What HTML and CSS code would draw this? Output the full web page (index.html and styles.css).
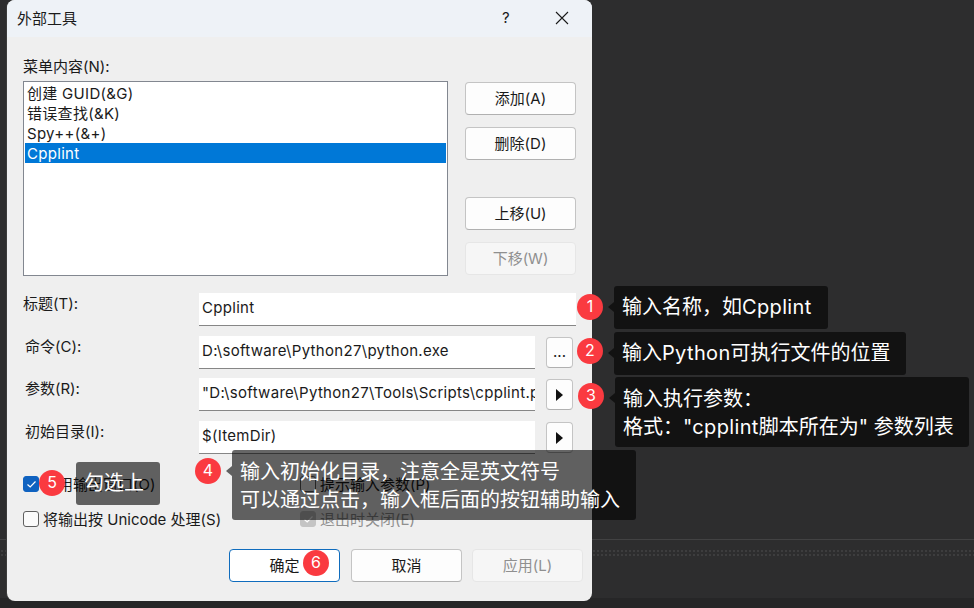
FILE: index.html
```html
<!DOCTYPE html>
<html lang="zh-CN">
<head>
    <meta charset="utf-8" />
    <title>外部工具</title>
    <link rel="stylesheet" href="styles.css">
</head>
<body>
    <div class="desktop">
        <div class="ide-main"></div>
        <div class="ide-dots"></div>
        <div class="ide-status"></div>

        <div class="dialog">
            <div class="titlebar">
                <span class="titlebar-text">外部工具</span>
                <span class="titlebar-help">?</span>
                <svg class="titlebar-close" width="14" height="14" viewBox="0 0 14 14"><path d="M1 1 L13 13 M13 1 L1 13" stroke="#1a1a1a" stroke-width="1.1" fill="none"/></svg>
            </div>
            <div class="dialog-body">
                <div class="menu-label">菜单内容(N):</div>
                <div class="menu-row">
                    <ul class="listbox">
                        <li>创建 GUID(&amp;G)</li>
                        <li>错误查找(&amp;K)</li>
                        <li>Spy++(&amp;+)</li>
                        <li class="selected">Cpplint</li>
                    </ul>
                    <div class="menu-buttons">
                        <button class="btn">添加(A)</button>
                        <button class="btn">删除(D)</button>
                        <button class="btn btn-up">上移(U)</button>
                        <button class="btn btn-disabled">下移(W)</button>
                    </div>
                </div>
                <div class="fields">
                    <div class="field-label field-label-first">标题(T):</div>
                    <div class="field-input field-input-wide">Cpplint</div>

                    <div class="field-label">命令(C):</div>
                    <div class="field-input">D:\software\Python27\python.exe</div>
                    <button class="btn btn-small btn-dots">...</button>

                    <div class="field-label">参数(R):</div>
                    <div class="field-input">"D:\software\Python27\Tools\Scripts\cpplint.py"</div>
                    <button class="btn btn-small"><svg width="9" height="12" viewBox="0 0 9 12"><path d="M1 0 L8 6 L1 12 Z" fill="#111"/></svg></button>

                    <div class="field-label">初始目录(I):</div>
                    <div class="field-input">$(ItemDir)</div>
                    <button class="btn btn-small"><svg width="9" height="12" viewBox="0 0 9 12"><path d="M1 0 L8 6 L1 12 Z" fill="#111"/></svg></button>
                </div>
                <div class="options">
                    <div class="option">
                        <span class="check check-on"><svg width="11" height="9" viewBox="0 0 11 9"><path d="M1.5 4.5 L4.2 7 L9.5 1.5" stroke="#fff" stroke-width="1.2" fill="none"/></svg></span>
                        <span class="option-text">使用输出窗口(O)</span>
                    </div>
                    <div class="option">
                        <span class="check"></span>
                        <span class="option-text">提示输入参数(P)</span>
                    </div>
                    <div class="option">
                        <span class="check"></span>
                        <span class="option-text">将输出按 Unicode 处理(S)</span>
                    </div>
                    <div class="option option-off">
                        <span class="check check-off"><svg width="11" height="9" viewBox="0 0 11 9"><path d="M1.5 4.5 L4.2 7 L9.5 1.5" stroke="#fff" stroke-width="1.2" fill="none"/></svg></span>
                        <span class="option-text">退出时关闭(E)</span>
                    </div>
                </div>
                <div class="actions">
                    <button class="btn btn-default">确定</button>
                    <button class="btn">取消</button>
                    <button class="btn btn-disabled">应用(L)</button>
                </div>
            </div>
        </div>

        <!-- annotations drawn over the screenshot -->
        <span class="badge badge-1">1</span>
        <div class="callout callout-1">输入名称，如<span class="latin">Cpplint</span></div>
        <span class="badge badge-2">2</span>
        <div class="callout callout-2">输入<span class="latin">Python</span>可执行文件的位置</div>
        <span class="badge badge-3">3</span>
        <div class="callout callout-3">输入执行参数：<br>格式："<span class="latin">cpplint</span>脚本所在为" 参数列表</div>
        <span class="badge badge-4">4</span>
        <div class="callout callout-4">输入初始化目录，注意全是英文符号<br>可以通过点击，输入框后面的按钮辅助输入</div>
        <span class="badge badge-5">5</span>
        <div class="callout callout-5">勾选上</div>
        <span class="badge badge-6">6</span>
    </div>
</body>
</html>
```

FILE: styles.css
```css
html, body {
    margin: 0;
    padding: 0;
    width: 100%;
    height: 100%;
    overflow: hidden;
    background: #2d2d2e;
    font-family: Inter, "Noto Sans CJK SC", sans-serif;
    font-size: 15px;
    color: #1a1a1a;
}

.desktop {
    position: relative;
    width: 974px;
    height: 608px;
    display: flex;
    flex-direction: column;
}
.ide-main {
    height: 539px;
    border-bottom: 1px solid #424243;
}
.ide-dots {
    height: 7px;
    margin-top: 9px;
    background-image: radial-gradient(#3d3d3e 0.8px, transparent 1px);
    background-size: 4px 4px;
}
.ide-status {
    margin-top: 42px;
    flex: 1;
    background: #262627;
}

/* dialog window */
.dialog {
    position: absolute;
    left: 7px;
    top: 0;
    width: 585px;
    height: 601px;
    background: #efefef;
    border-radius: 8px;
    overflow: hidden;
    box-shadow: -1px 0 0 #3c3c3c;
}
.titlebar {
    height: 37px;
    padding: 0 0 2px 10px;
    box-sizing: border-box;
    background: #eef2f7;
    display: flex;
    align-items: center;
}
.titlebar-text {
    flex: 1;
}
.titlebar-help {
    font-size: 15px;
    width: 12px;
    margin-right: 44px;
    transform: translateX(3px);
}
.titlebar-close {
    margin-right: 23px;
}
.dialog-body {
    padding: 19px 0 0 16px;
}
.menu-label {
    height: 20px;
    box-sizing: border-box;
    padding-top: 1px;
    line-height: 20px;
}
.menu-row {
    display: flex;
    margin-top: 5px;
}
.listbox {
    list-style: none;
    margin: 0;
    padding: 1px;
    width: 425px;
    height: 195px;
    box-sizing: border-box;
    background: #fff;
    border: 1px solid #828790;
    letter-spacing: 0.3px;
}
.listbox li {
    height: 20px;
    box-sizing: border-box;
    padding: 1px 0 0 2px;
    line-height: 20px;
}
.listbox li.selected {
    background: #0078d7;
    color: #fff;
}
.menu-buttons {
    display: flex;
    flex-direction: column;
    gap: 12px;
    margin: 1px 0 0 17px;
}
.btn {
    width: 111px;
    height: 33px;
    padding: 0 0 2px;
    font: inherit;
    color: #1a1a1a;
    background: #fdfdfd;
    border: 1px solid #c4c4c4;
    border-bottom-color: #b0b0b0;
    border-radius: 4px;
    display: flex;
    align-items: center;
    justify-content: center;
}
.btn-up {
    margin-top: 25px;
}
.btn-disabled {
    background: #f6f6f6;
    color: #8f8f8f;
    border-color: #e6e6e6;
}
.btn-default {
    border-color: #0f6cbd;
    background: #fff;
}
.btn-small {
    width: 27px;
    height: 31px;
    margin: 1px 0 0 11px;
    padding: 0;
}
.btn-dots {
    padding-bottom: 2px;
}

.fields {
    display: grid;
    grid-template-columns: 176px 336px 38px;
    grid-template-rows: 43px 42px 43px 33px;
    margin-top: 17px;
}
.field-label {
    padding: 1px 0 0 2px;
    line-height: 20px;
}
.field-label-first {
    padding-left: 0;
}
.field-input {
    height: 33px;
    box-sizing: border-box;
    background: #fff;
    border-bottom: 1px solid #868686;
    padding-left: 3px;
    line-height: 29px;
    letter-spacing: 0.3px;
    white-space: nowrap;
    overflow: hidden;
}
.field-input-wide {
    width: 377px;
    grid-column: 2 / 4;
}

.options {
    display: grid;
    grid-template-columns: 277px 1fr;
    grid-auto-rows: 35px;
    margin-top: 20px;
}
.option {
    display: flex;
    align-items: center;
    height: 20px;
    gap: 4px;
    white-space: nowrap;
}
.option-text {
    margin-bottom: 2px;
}
.option-off {
    color: #8f8f8f;
}
.check {
    width: 16px;
    height: 16px;
    box-sizing: border-box;
    border: 1px solid #5f5f5f;
    border-radius: 3px;
    background: #fafafa;
    display: flex;
    align-items: center;
    justify-content: center;
}
.check-on {
    background: #0f62c0;
    border-color: #0f62c0;
}
.check-off {
    background: #c4c4c4;
    border-color: #c4c4c4;
}
.actions {
    display: flex;
    gap: 11px;
    margin: 5px 0 0 206px;
}
.actions .btn-disabled {
    margin-left: -1px;
}

/* annotations */
.badge {
    position: absolute;
    width: 26px;
    height: 26px;
    border-radius: 50%;
    background: #fa3a40;
    color: #fff;
    font-size: 16px;
    line-height: 25px;
    text-align: center;
}
.badge-1 { left: 577px; top: 294px; }
.badge-2 { left: 577px; top: 338px; }
.badge-3 { left: 578px; top: 383px; }
.badge-4 { left: 195px; top: 458px; }
.badge-5 { left: 39px; top: 470px; }
.badge-6 { left: 303px; top: 550px; }

.callout {
    position: absolute;
    box-sizing: border-box;
    padding: 7px 8px;
    font-size: 20px;
    line-height: 28px;
    color: #fff;
    background: rgba(0, 0, 0, 0.6);
    border-radius: 3px;
    white-space: nowrap;
}
.callout::before {
    content: "";
    position: absolute;
    left: -6px;
    top: 16px;
    border-style: solid;
    border-width: 5px 6px 5px 0;
    border-color: transparent rgba(0, 0, 0, 0.6) transparent transparent;
}
.latin {
    letter-spacing: 0.35px;
}
.callout-1 { left: 614px; top: 286px; width: 214px; height: 43px; }
.callout-2 { left: 614px; top: 332px; width: 292px; height: 43px; }
.callout-3 { left: 615px; top: 377px; width: 354px; height: 70px; padding-top: 8px; }
.callout-4 { left: 232px; top: 450px; width: 404px; height: 70px; padding-top: 8px; }
.callout-5 { left: 76px; top: 462px; width: 84px; height: 43px; }
.callout-5::before { display: none; }
```
